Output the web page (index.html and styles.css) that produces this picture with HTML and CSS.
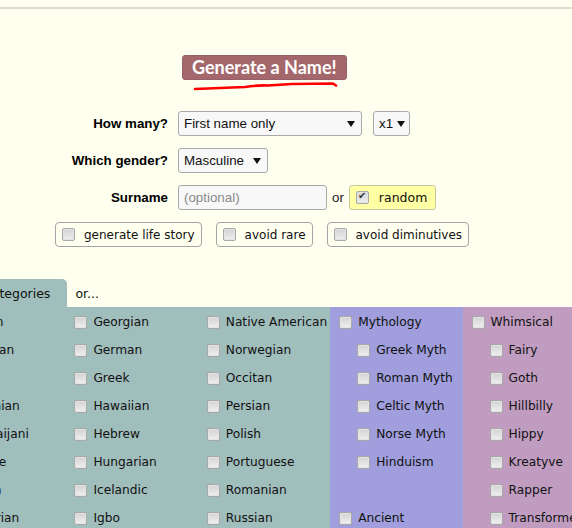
FILE: index.html
```html
<!DOCTYPE html>
<html lang="en">
<head>
<meta charset="UTF-8">
<meta name="viewport" content="width=device-width, initial-scale=1.0">
<title>Random Name Generator</title>
<link rel="stylesheet" href="styles.css">
</head>
<body>

<div class="rule"></div>

<div class="top">
    <button class="go" type="button">Generate a Name!</button>
    <!-- hand drawn underline -->
    <svg class="scribble" width="150" height="12" viewBox="0 0 150 12">
        <path d="M5 9 L55 7 Q68 5 78 5.5 L102 4 L143 3.5 L146 5.5" fill="none" stroke="#ff0000" stroke-width="2.6" stroke-linecap="round" stroke-linejoin="round"/>
    </svg>
</div>

<form class="options">
    <label class="opt-label" for="howMany">How many?</label>
    <div class="opt-row">
        <span class="pick wide"><select id="howMany"><option>First name only</option></select></span>
        <span class="pick small"><select><option>x1</option></select></span>
    </div>

    <label class="opt-label" for="gender">Which gender?</label>
    <div class="opt-row">
        <span class="pick"><select id="gender"><option>Masculine</option></select></span>
    </div>

    <label class="opt-label" for="surname">Surname</label>
    <div class="opt-row">
        <input type="text" id="surname" class="surname" placeholder="(optional)">
        <span class="or">or</span>
        <label class="random"><input type="checkbox" checked> random</label>
    </div>
</form>

<div class="extras">
    <label class="extra"><input type="checkbox"> generate life story</label>
    <label class="extra"><input type="checkbox"> avoid rare</label>
    <label class="extra"><input type="checkbox"> avoid diminutives</label>
</div>

<div class="usage">
    <div class="tabs">
        <span class="tab">Categories</span>
        <span class="tab-alt">or...</span>
    </div>

    <div class="cols">
        <div class="col teal">
            <label class="item"><input type="checkbox"> African</label>
            <label class="item"><input type="checkbox"> Albanian</label>
            <label class="item"><input type="checkbox"> Arabic</label>
            <label class="item"><input type="checkbox"> Armenian</label>
            <label class="item"><input type="checkbox"> Azerbaijani</label>
            <label class="item"><input type="checkbox"> Basque</label>
            <label class="item"><input type="checkbox"> Breton</label>
            <label class="item"><input type="checkbox"> Bulgarian</label>
            <label class="item"><input type="checkbox"> Catalan</label>
        </div>
        <div class="col teal">
            <label class="item"><input type="checkbox"> Georgian</label>
            <label class="item"><input type="checkbox"> German</label>
            <label class="item"><input type="checkbox"> Greek</label>
            <label class="item"><input type="checkbox"> Hawaiian</label>
            <label class="item"><input type="checkbox"> Hebrew</label>
            <label class="item"><input type="checkbox"> Hungarian</label>
            <label class="item"><input type="checkbox"> Icelandic</label>
            <label class="item"><input type="checkbox"> Igbo</label>
            <label class="item"><input type="checkbox"> Indian</label>
        </div>
        <div class="col teal">
            <label class="item"><input type="checkbox"> Native American</label>
            <label class="item"><input type="checkbox"> Norwegian</label>
            <label class="item"><input type="checkbox"> Occitan</label>
            <label class="item"><input type="checkbox"> Persian</label>
            <label class="item"><input type="checkbox"> Polish</label>
            <label class="item"><input type="checkbox"> Portuguese</label>
            <label class="item"><input type="checkbox"> Romanian</label>
            <label class="item"><input type="checkbox"> Russian</label>
            <label class="item"><input type="checkbox"> Scandinavian</label>
        </div>
        <div class="col purple">
            <label class="item"><input type="checkbox"> Mythology</label>
            <label class="item sub"><input type="checkbox"> Greek Myth</label>
            <label class="item sub"><input type="checkbox"> Roman Myth</label>
            <label class="item sub"><input type="checkbox"> Celtic Myth</label>
            <label class="item sub"><input type="checkbox"> Norse Myth</label>
            <label class="item sub"><input type="checkbox"> Hinduism</label>
            <div class="item"></div>
            <label class="item"><input type="checkbox"> Ancient</label>
            <label class="item sub"><input type="checkbox"> Ancient Celtic</label>
        </div>
        <div class="col pink">
            <label class="item"><input type="checkbox"> Whimsical</label>
            <label class="item sub"><input type="checkbox"> Fairy</label>
            <label class="item sub"><input type="checkbox"> Goth</label>
            <label class="item sub"><input type="checkbox"> Hillbilly</label>
            <label class="item sub"><input type="checkbox"> Hippy</label>
            <label class="item sub"><input type="checkbox"> Kreatyve</label>
            <label class="item sub"><input type="checkbox"> Rapper</label>
            <label class="item sub"><input type="checkbox"> Transformer</label>
            <label class="item sub"><input type="checkbox"> Witch</label>
        </div>
    </div>
</div>

</body>
</html>
```

FILE: styles.css
```css
body {
    margin: 0;
    background-color: #ffffef;
    font-family: "DejaVu Sans", sans-serif;
    font-size: 12px;
    color: #111;
    overflow: hidden;
}
.rule {
    margin-top: 7px;
    height: 2px;
    background-color: #dcdcd2;
}

/* generate button */
.top {
    padding: 46px 0 0 182px;
}
.go {
    display: block;
    height: 25px;
    padding: 0 9px;
    background-color: #a4686c;
    border: 1px solid #96606a;
    border-radius: 3px;
    color: #fff;
    font-family: Lato, sans-serif;
    font-weight: bold;
    font-size: 18px;
    line-height: 23px;
    cursor: pointer;
}
.scribble {
    display: block;
    margin-left: 8px;
}

/* options */
.options {
    display: grid;
    grid-template-columns: 168px auto;
    column-gap: 10px;
    row-gap: 12px;
    margin-top: 19px;
    font-family: "Liberation Sans", Arial, sans-serif;
    font-size: 13.33px;
}
.opt-label {
    justify-self: end;
    align-self: center;
    font-weight: bold;
    color: #000;
}
.opt-row {
    display: flex;
    align-items: center;
    height: 25px;
}
.pick {
    position: relative;
    display: inline-block;
    margin-right: 11px;
}
.pick select {
    appearance: none;
    -webkit-appearance: none;
    height: 25px;
    padding: 0 22px 0 5px;
    background-color: #f8f8f8;
    border: 1px solid #a9a9a9;
    border-radius: 3px;
    font-family: "Liberation Sans", Arial, sans-serif;
    font-size: 13.33px;
    color: #111;
}
.pick.wide select {
    width: 184px;
}
.pick.small select {
    padding-right: 15px;
}
.pick::after {
    content: "";
    position: absolute;
    right: 7px;
    top: 10px;
    border-left: 4px solid transparent;
    border-right: 4px solid transparent;
    border-top: 6px solid #111;
    pointer-events: none;
}
.pick.small::after {
    right: 5px;
}
.surname {
    box-sizing: border-box;
    width: 149px;
    height: 25px;
    padding: 0 5px;
    background-color: #f8f8f8;
    border: 1px solid #a9a9a9;
    border-radius: 3px;
    font-family: "Liberation Sans", Arial, sans-serif;
    font-size: 13.33px;
}
.surname::placeholder {
    color: #8a8a8a;
}
.or {
    margin: 0 5px;
    color: #222;
}
.random {
    display: flex;
    align-items: center;
    gap: 10px;
    box-sizing: border-box;
    height: 25px;
    padding: 0 8px 0 6px;
    background-color: #ffffa4;
    border: 1px solid #c8c8a0;
    border-radius: 3px;
    font-family: "DejaVu Sans", sans-serif;
    font-size: 12.5px;
    color: #111;
}

/* checkboxes */
input[type="checkbox"] {
    appearance: none;
    -webkit-appearance: none;
    position: relative;
    width: 13px;
    height: 13px;
    margin: 0;
    flex: none;
    border: 1px solid #a8a8a8;
    border-radius: 2px;
    background: linear-gradient(#d2d2d2, #f0f0f0);
    box-shadow: inset 0 0 0 1px #e4e4e4;
}
input[type="checkbox"]:checked::after {
    content: "\2714";
    position: absolute;
    left: 1px;
    top: -2px;
    font-size: 10px;
    color: #333;
}

.extras {
    display: flex;
    gap: 14px;
    margin: 12px 0 0 55px;
}
.extra {
    display: flex;
    align-items: center;
    gap: 9px;
    box-sizing: border-box;
    height: 25px;
    padding: 0 6px;
    border: 1px solid #a4a4a4;
    border-radius: 4px;
}

/* usage categories */
.usage {
    margin: 32px 0 0 -67px;
}
.tabs {
    display: flex;
    align-items: center;
    height: 28px;
}
.tab {
    display: flex;
    align-items: center;
    height: 28px;
    margin-left: 42px;
    padding: 0 17px 0 8px;
    background-color: #a0bebc;
    border-radius: 5px 5px 0 0;
    font-size: 12.5px;
}
.tab-alt {
    margin-left: 8px;
    font-size: 12.5px;
}
.cols {
    display: grid;
    grid-template-columns: repeat(5, 132.4px);
}
.col {
    padding: 1px 0 0 9px;
}
.teal {
    background-color: #a0bebc;
}
.purple {
    background-color: #a09edc;
}
.pink {
    background-color: #c09dc0;
}
.item {
    display: flex;
    align-items: center;
    gap: 6px;
    height: 28px;
    white-space: nowrap;
    font-size: 12.2px;
}
.item.sub {
    padding-left: 18px;
}
```
